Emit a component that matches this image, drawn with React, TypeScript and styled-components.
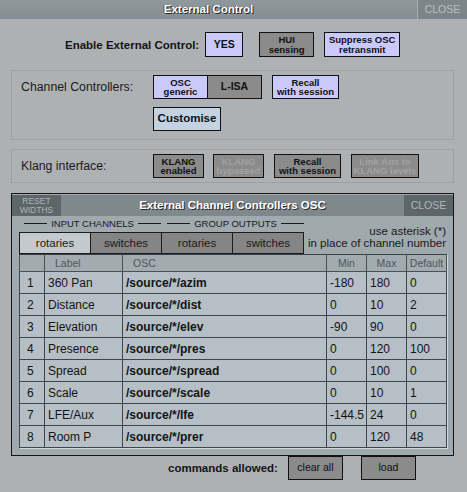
import React from 'react';
import styled, { createGlobalStyle, css } from 'styled-components';

const GlobalStyle = createGlobalStyle`
    html, body { margin: 0; padding: 0; background: #aeb1b4; }
    * { box-sizing: border-box; }
`;

type Tone = 'lav' | 'grey' | 'blue' | 'off';

interface IRow {
    label: string;
    osc: string;
    min: string;
    max: string;
    def: string;
}

const rows: IRow[] = [
    { label: '360 Pan', osc: '/source/*/azim', min: '-180', max: '180', def: '0' },
    { label: 'Distance', osc: '/source/*/dist', min: '0', max: '10', def: '2' },
    { label: 'Elevation', osc: '/source/*/elev', min: '-90', max: '90', def: '0' },
    { label: 'Presence', osc: '/source/*/pres', min: '0', max: '120', def: '100' },
    { label: 'Spread', osc: '/source/*/spread', min: '0', max: '100', def: '0' },
    { label: 'Scale', osc: '/source/*/scale', min: '0', max: '10', def: '1' },
    { label: 'LFE/Aux', osc: '/source/*/lfe', min: '-144.5', max: '24', def: '0' },
    { label: 'Room P', osc: '/source/*/prer', min: '0', max: '120', def: '48' },
];

const App = () => {
    return (
        <Frame>
            <GlobalStyle />
            <TitleBar>
                <Title>External Control</Title>
                <CloseTab>CLOSE</CloseTab>
            </TitleBar>

            {/* enable row */}
            <EnableRow>
                <EnableLabel>Enable External Control:</EnableLabel>
                <Btn $tone="lav" $w={38} $h={25} $fs={10.5}>YES</Btn>
                <Btn $tone="grey" $w={55} $h={25} $ml={16}>HUI<br />sensing</Btn>
                <Btn $tone="lav" $w={76} $h={25} $ml={10}>Suppress OSC<br />retransmit</Btn>
            </EnableRow>

            {/* channel controllers */}
            <GroupBox $mt={13} $h={70}>
                <GroupLabel>Channel Controllers:</GroupLabel>
                <BtnRow>
                    <Btn $tone="lav" $w={55}>OSC<br />generic</Btn>
                    <Btn $tone="grey" $w={55} $ml={-1} $fs={10.5}>L-ISA</Btn>
                    <Btn $tone="lav" $w={67} $ml={10}>Recall<br />with session</Btn>
                </BtnRow>
                <span />
                <BtnRow>
                    <Btn $tone="blue" $w={68} $fs={11.5}>Customise</Btn>
                </BtnRow>
            </GroupBox>

            {/* klang */}
            <GroupBox $mt={9} $h={34}>
                <GroupLabel>Klang interface:</GroupLabel>
                <BtnRow>
                    <Btn $tone="grey" $w={51}>KLANG<br />enabled</Btn>
                    <Btn $tone="off" $w={51} $ml={9}>KLANG<br />bypassed</Btn>
                    <Btn $tone="grey" $w={67} $ml={10}>Recall<br />with session</Btn>
                    <Btn $tone="off" $w={68} $ml={10}>Link Aux to<br />KLANG levels</Btn>
                </BtnRow>
            </GroupBox>

            {/* sub window */}
            <SubWindow>
                <SubTitleBar>
                    <DarkTab $w={49} $fs={8.5}>RESET<br />WIDTHS</DarkTab>
                    <SubTitle>External Channel Controllers OSC</SubTitle>
                    <DarkTab $w={49} $fs={10.5}>CLOSE</DarkTab>
                </SubTitleBar>

                <Controls>
                    <div>
                        <Headings>
                            <Heading>INPUT CHANNELS</Heading>
                            <Heading>GROUP OUTPUTS</Heading>
                        </Headings>
                        <Tabs>
                            <Tab $active>rotaries</Tab>
                            <Tab>switches</Tab>
                            <Tab>rotaries</Tab>
                            <Tab>switches</Tab>
                        </Tabs>
                    </div>
                    <Note>use asterisk (*)<br />in place of channel number</Note>
                </Controls>

                <Table>
                    <colgroup>
                        <col style={{ width: 25 }} />
                        <col style={{ width: 78 }} />
                        <col style={{ width: 204 }} />
                        <col style={{ width: 40 }} />
                        <col style={{ width: 40 }} />
                        <col style={{ width: 40 }} />
                    </colgroup>
                    <thead>
                        <tr>
                            <Th />
                            <Th>Label</Th>
                            <Th>OSC</Th>
                            <Th $center>Min</Th>
                            <Th $center>Max</Th>
                            <Th $center>Default</Th>
                        </tr>
                    </thead>
                    <tbody>
                        {rows.map((r, i) => (
                            <tr key={i}>
                                <Td $num>{i + 1}</Td>
                                <Td>{r.label}</Td>
                                <Td $bold>{r.osc}</Td>
                                <Td>{r.min}</Td>
                                <Td>{r.max}</Td>
                                <Td>{r.def}</Td>
                            </tr>
                        ))}
                    </tbody>
                </Table>
            </SubWindow>

            <BottomRow>
                <CmdLabel>commands allowed:</CmdLabel>
                <Btn $tone="grey" $w={55} $h={24} $fs={10.5} $plain>clear all</Btn>
                <Btn $tone="grey" $w={55} $h={24} $fs={10.5} $plain $ml={18}>load</Btn>
            </BottomRow>
        </Frame>
    );
};

export default App;


const Frame = styled.div`
    width: 467px;
    height: 492px;
    background: #aeb1b4;
    display: flex;
    flex-direction: column;
    overflow: hidden;
    font-family: "Liberation Sans", Arial, sans-serif;
    color: #141414;
`
const TitleBar = styled.div`
    height: 19px;
    display: flex;
    background: linear-gradient(#8f989d, #858e93);
`
const Title = styled.div`
    flex: 1;
    text-align: center;
    line-height: 19px;
    font-size: 11.5px;
    font-weight: 700;
    color: #fff;
    text-shadow: 1px 1px 0 #2a2a2a, -1px 0 0 #555;
`
const CloseTab = styled.div`
    width: 50px;
    border-left: 1px solid #a6adb1;
    background: #7c8589;
    color: #b9c0c4;
    font-size: 10.5px;
    text-align: center;
    line-height: 19px;
`
const EnableRow = styled.div`
    display: flex;
    align-items: center;
    height: 25px;
    margin: 13px 0 0 65px;
`
const EnableLabel = styled.span`
    font-size: 11.5px;
    font-weight: 700;
    margin-right: 6px;
`
const GroupBox = styled.div<{ $mt: number; $h: number }>`
    margin: ${({ $mt }) => $mt}px 0 0 11px;
    width: 443px;
    height: ${({ $h }) => $h}px;
    border: 1px solid #98a1a7;
    padding: 4px 0 0 9px;
    display: grid;
    grid-template-columns: 132px 1fr;
    grid-auto-rows: 24px;
    row-gap: 8px;
    align-items: center;
`
const GroupLabel = styled.span`
    font-size: 12.3px;
    color: #1a1a1a;
`
const BtnRow = styled.div`
    display: flex;
    align-items: center;
`
const toneCss = {
    lav: css`background: #c9c9fb; color: #111;`,
    grey: css`background: #8b8b8b; color: #111;`,
    blue: css`background: #c4d3e1; color: #111;`,
    off: css`background: #8b8b8b; color: #a2a2a2;`,
};
const Btn = styled.div<{ $tone: Tone; $w: number; $h?: number; $ml?: number; $fs?: number; $plain?: boolean }>`
    width: ${({ $w }) => $w}px;
    height: ${({ $h }) => $h ?? 24}px;
    margin-left: ${({ $ml }) => $ml ?? 0}px;
    border: 1px solid #111;
    display: flex;
    align-items: center;
    justify-content: center;
    text-align: center;
    font-size: ${({ $fs }) => $fs ?? 9.5}px;
    font-weight: ${({ $plain }) => $plain ? 400 : 700};
    line-height: 9.5px;
    white-space: nowrap;
    ${({ $tone }) => toneCss[$tone]}
`
const SubWindow = styled.div`
    margin: 10px 0 0 11px;
    width: 443px;
    height: 263px;
    border: 1px solid #151515;
    background: #a0a9ae;
    display: flex;
    flex-direction: column;
`
const SubTitleBar = styled.div`
    height: 21px;
    margin-top: 1px;
    display: flex;
    background: #7f888d;
`
const DarkTab = styled.div<{ $w: number; $fs: number }>`
    width: ${({ $w }) => $w}px;
    background: #5e666a;
    color: #adb5ba;
    font-size: ${({ $fs }) => $fs}px;
    line-height: 8.5px;
    display: flex;
    align-items: center;
    justify-content: center;
    text-align: center;
`
const SubTitle = styled.div`
    flex: 1;
    text-align: center;
    line-height: 21px;
    font-size: 11.5px;
    font-weight: 700;
    color: #fff;
    text-shadow: 1px 1px 0 #2a2a2a;
`
const Controls = styled.div`
    display: flex;
    justify-content: space-between;
    align-items: flex-end;
    padding: 0 7px;
    margin-top: 1px;
`
const Headings = styled.div`
    display: flex;
    gap: 6px;
    padding-left: 5px;
    height: 13px;
    margin-bottom: 2px;
`
const Heading = styled.div`
    width: 137px;
    display: flex;
    align-items: center;
    gap: 4px;
    font-size: 9.5px;
    color: #1a1a1a;
    &::before, &::after {
        content: '';
        flex: 1;
        height: 1px;
        background: #1a1a1a;
    }
`
const Tabs = styled.div`
    display: flex;
`
const Tab = styled.div<{ $active?: boolean }>`
    width: 72px;
    height: 22px;
    border: 1px solid #1c1c1c;
    & + & { margin-left: -1px; }
    background: ${({ $active }) => $active ? '#c3c9cd' : '#858585'};
    font-size: 11.5px;
    color: #1a1a1a;
    display: flex;
    align-items: center;
    justify-content: center;
`
const Note = styled.div`
    text-align: right;
    font-size: 11.5px;
    line-height: 11.5px;
    color: #1a1a1a;
    margin-bottom: 5px;
`
const Table = styled.table`
    margin: 0 7px;
    width: 427px;
    table-layout: fixed;
    border-collapse: collapse;
    border: 1px solid #3a4044;
    box-shadow: 1px 1px 0 #d0d6d9;
`
const Th = styled.th<{ $center?: boolean }>`
    height: 17px;
    padding: 0 0 0 ${({ $center }) => $center ? 0 : 10}px;
    border: 1px solid #4a5155;
    border-top: none;
    background: #a2abb0;
    font-size: 10.5px;
    font-weight: 400;
    color: #4e565b;
    text-align: ${({ $center }) => $center ? 'center' : 'left'};
    white-space: nowrap;
    overflow: hidden;
`
const Td = styled.td<{ $bold?: boolean; $num?: boolean }>`
    height: 22px;
    padding: 0 0 0 ${({ $num }) => $num ? 7 : 3}px;
    border: 1px solid #3f4549;
    background: #b5bfc5;
    font-size: 12px;
    font-weight: ${({ $bold }) => $bold ? 700 : 400};
    color: #141414;
    white-space: nowrap;
    overflow: hidden;
`
const BottomRow = styled.div`
    display: flex;
    align-items: center;
    height: 24px;
    margin-left: 168px;
`
const CmdLabel = styled.span`
    font-size: 11.5px;
    font-weight: 700;
    margin-right: 10px;
`
